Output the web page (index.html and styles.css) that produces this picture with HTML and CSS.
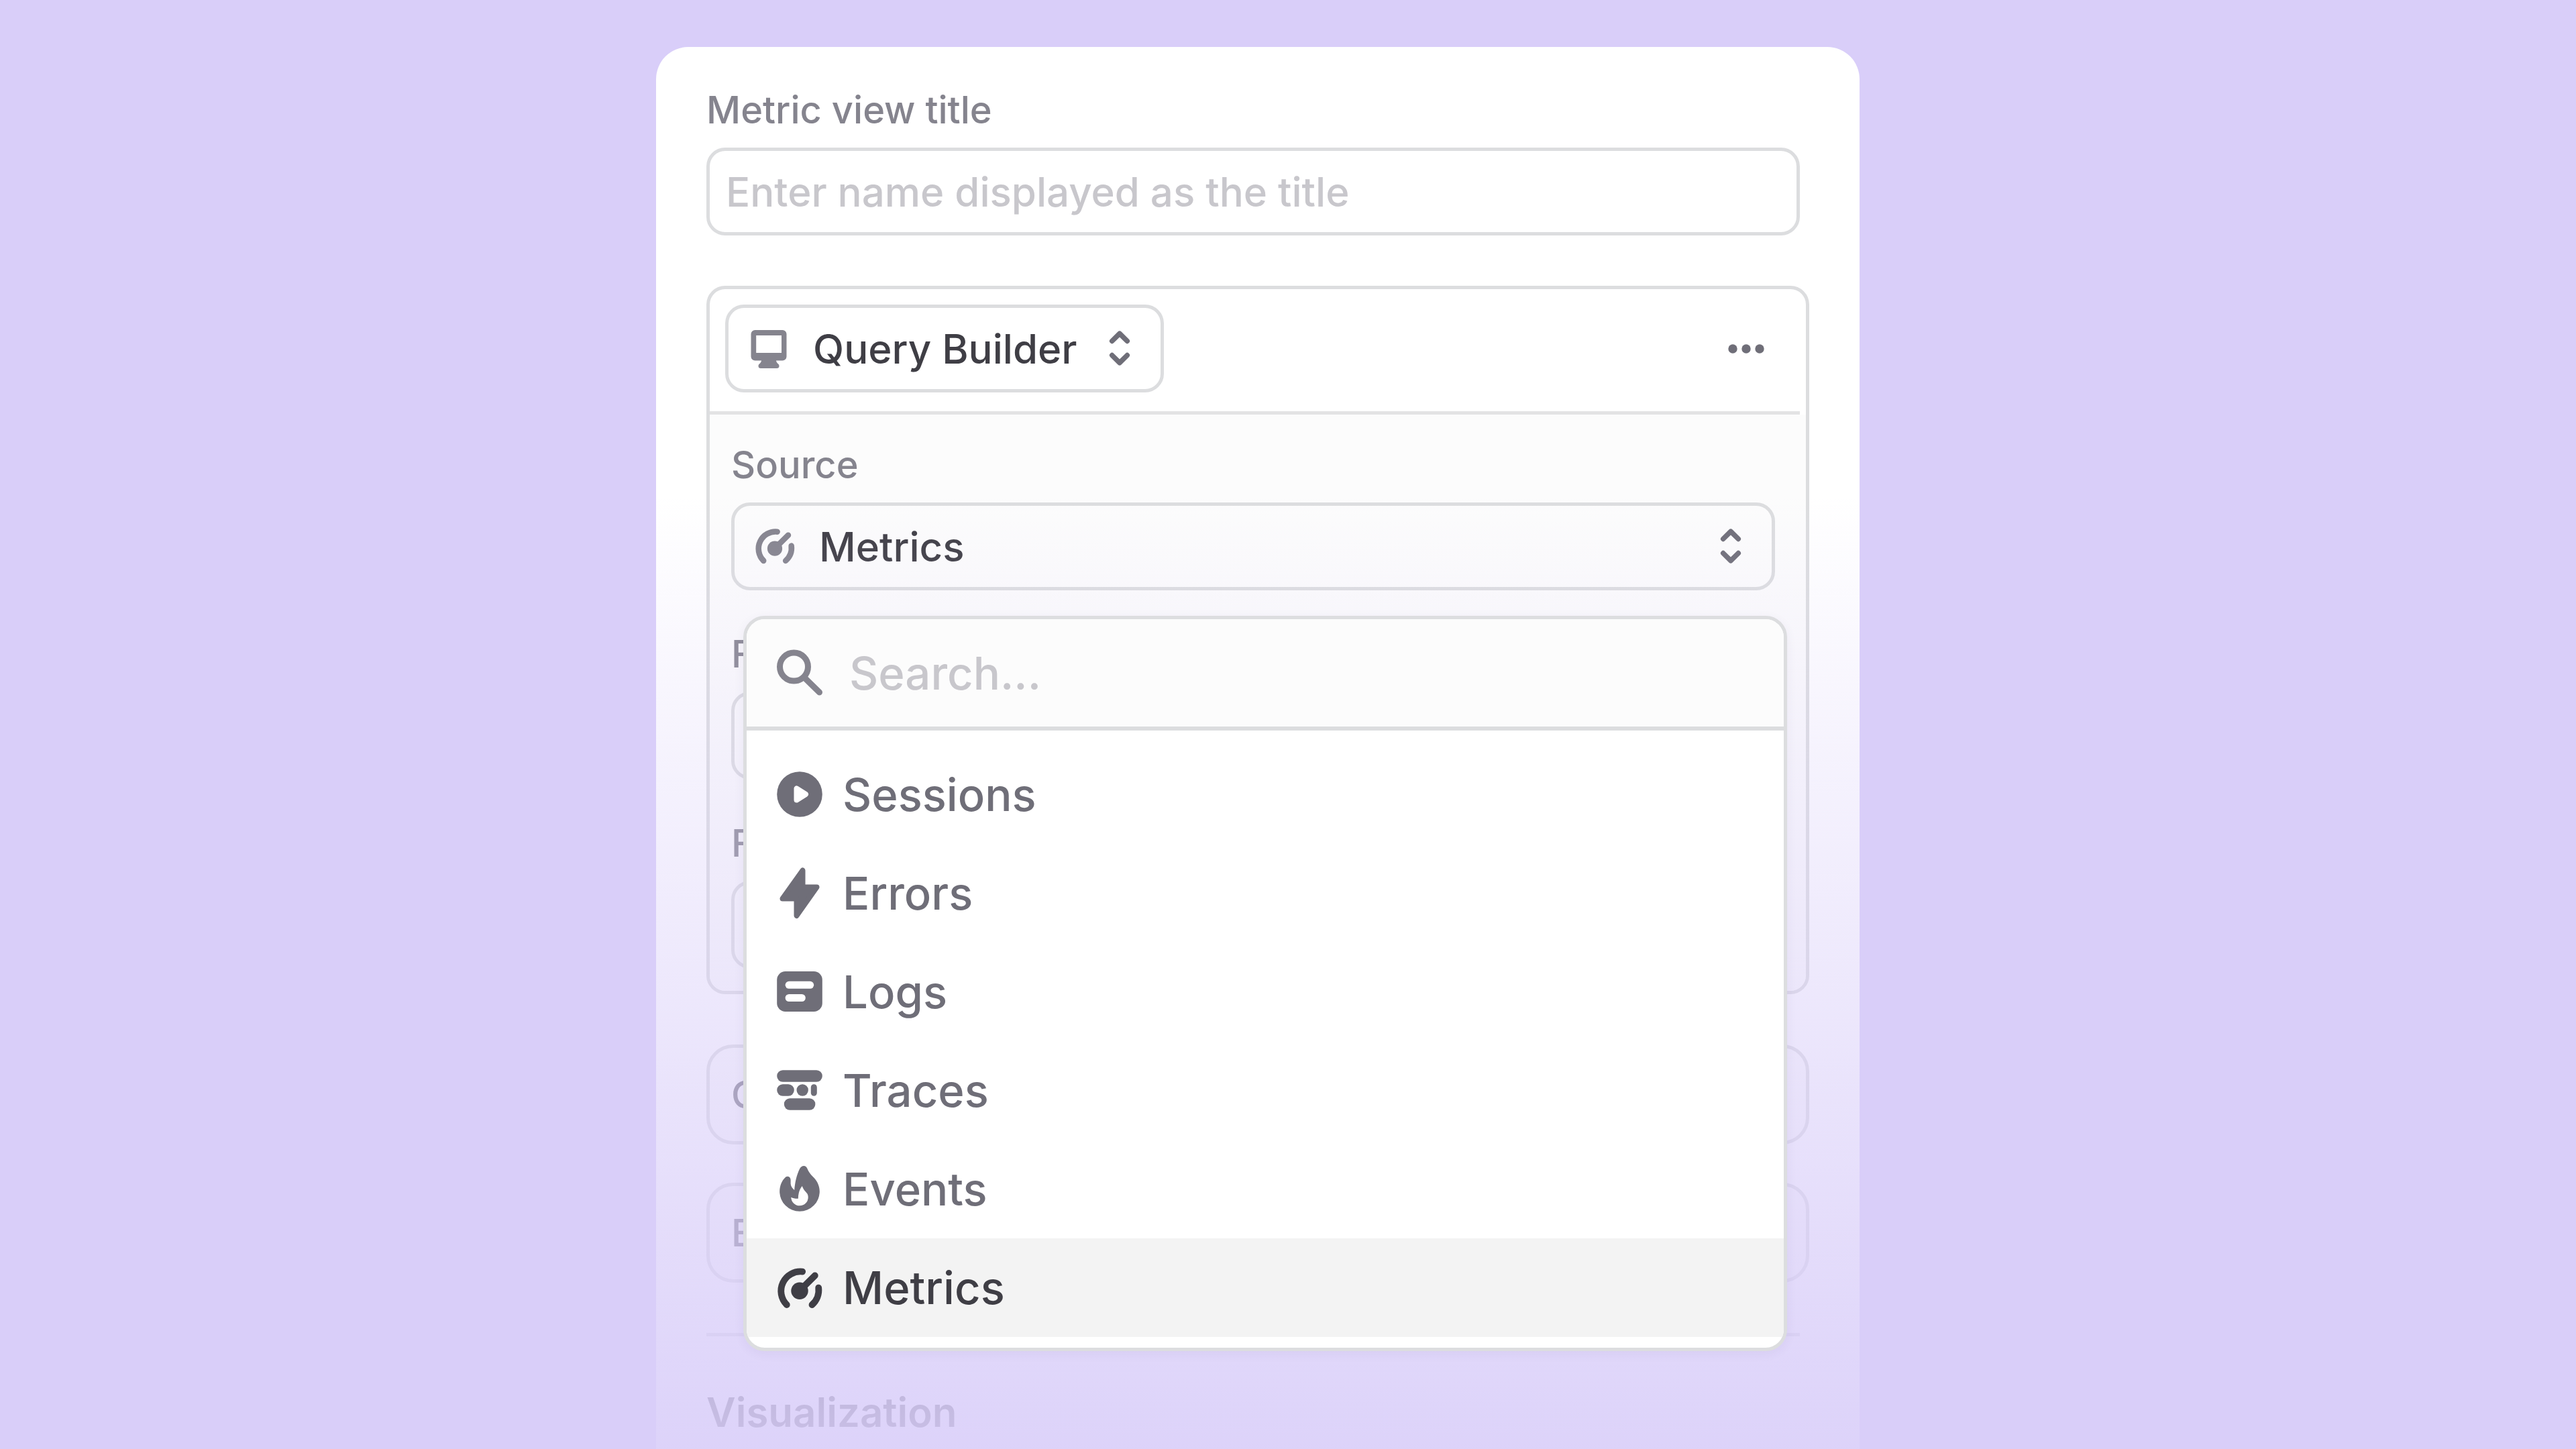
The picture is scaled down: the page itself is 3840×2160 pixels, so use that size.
FILE: index.html
```html
<!DOCTYPE html>
<html lang="en">
<head>
<meta charset="utf-8">
<title>Metric view</title>
<link rel="stylesheet" href="styles.css">
</head>
<body>
<svg class="sprite" aria-hidden="true">
  <symbol id="gauge" viewBox="0 0 80 80">
    <g fill="none" stroke="currentColor" stroke-width="9.8" stroke-linecap="round">
      <path d="M44.2 15.6A29 29 0 0 0 20.8 65M68.2 39.6A29 29 0 0 1 58.5 65M40 44L62.8 21.4"/>
    </g>
    <circle cx="40" cy="44.2" r="12.7" fill="currentColor"/>
  </symbol>
  <symbol id="chevrons" viewBox="0 0 70 70">
    <path d="M23.7 24.4L35 13.3L46.3 24.4M23.7 45.6L35 56.7L46.3 45.6" fill="none" stroke="currentColor" stroke-width="7.5" stroke-linecap="round" stroke-linejoin="round"/>
  </symbol>
</svg>
<main class="card">
  <form class="form">
    <div class="field field-title">
      <label class="label" for="title">Metric view title</label>
      <input class="input" id="title" type="text" placeholder="Enter name displayed as the title">
    </div>

    <section class="panel">
      <header class="panel-header">
        <div class="select-wrap select-auto">
          <svg class="select-icon" viewBox="0 0 70 70" aria-hidden="true"><path fill="currentColor" fill-rule="evenodd" d="M14.5 8h41a6 6 0 0 1 6 6v33.500a6 6 0 0 1-6 6H46c.3 2 1.200 3.300 2.800 4.700 1.300 1.200 1.700 2.200 1.700 3.500 0 2-1.300 3.300-3.500 3.300H23c-2.200 0-3.500-1.300-3.500-3.300 0-1.300.4-2.300 1.700-3.500 1.600-1.400 2.500-2.700 2.800-4.700h-9.500a6 6 0 0 1-6-6V14a6 6 0 0 1 6-6zM16.200 16v26h37.800V16z"/></svg>
          <select class="select" aria-label="Query type"><option>Query Builder</option></select>
          <svg class="select-arrow" aria-hidden="true"><use href="#chevrons"/></svg>
        </div>
        <button class="more" type="button" aria-label="More options">
          <svg class="more-icon" viewBox="0 0 60 60" aria-hidden="true"><g fill="currentColor"><circle cx="10" cy="30" r="6.700"/><circle cx="30" cy="30" r="6.700"/><circle cx="50" cy="30" r="6.700"/></g></svg>
        </button>
      </header>
      <div class="panel-body">
        <div class="field">
          <label class="label" for="source">Source</label>
          <div class="select-wrap">
            <svg class="select-icon" aria-hidden="true"><use href="#gauge"/></svg>
            <select class="select" id="source"><option>Metrics</option></select>
            <svg class="select-arrow" aria-hidden="true"><use href="#chevrons"/></svg>
          </div>
          <div class="menu">
            <div class="menu-search">
              <svg class="menu-icon search-icon" viewBox="0 0 80 80" aria-hidden="true"><g fill="none" stroke="currentColor" stroke-width="9" stroke-linecap="round"><circle cx="31.500" cy="31" r="21"/><path d="M47 47L69.500 69"/></g></svg>
              <input class="search-input" type="text" placeholder="Search..." aria-label="Search sources">
            </div>
            <div class="menu-list">
              <button class="item" type="button">
                <svg class="menu-icon" viewBox="0 0 80 80" aria-hidden="true"><circle cx="40" cy="39" r="33.800" fill="currentColor"/><path d="M35.500 30.500V47.500L49 39z" fill="#fff" stroke="#fff" stroke-width="8" stroke-linejoin="round"/></svg>
                Sessions
              </button>
              <button class="item" type="button">
                <svg class="menu-icon" viewBox="0 0 80 80" aria-hidden="true"><path d="M44.500 5.500V30.500H65.500L35.500 73V47.500H14.500z" fill="currentColor" stroke="currentColor" stroke-width="8" stroke-linejoin="round"/></svg>
                Errors
              </button>
              <button class="item" type="button">
                <svg class="menu-icon" viewBox="0 0 80 80" aria-hidden="true"><rect x="6.200" y="9" width="67.600" height="60" rx="12.500" fill="currentColor"/><g fill="#fff"><rect x="18.600" y="23.800" width="42.600" height="11" rx="5.500"/><rect x="18.600" y="43" width="30.200" height="11" rx="5.500"/></g></svg>
                Logs
              </button>
              <button class="item" type="button">
                <svg class="menu-icon" viewBox="0 0 80 80" aria-hidden="true"><g fill="currentColor"><rect x="6.200" y="9.300" width="67.600" height="17.400" rx="8.700"/><rect x="6.200" y="30.300" width="25.600" height="17.400" rx="8.700"/><circle cx="44.200" cy="39" r="8.700"/><rect x="56.800" y="30.300" width="9" height="17.400" rx="4.500"/><rect x="16.800" y="51.300" width="46.600" height="17.400" rx="8.700"/></g></svg>
                Traces
              </button>
              <button class="item" type="button">
                <svg class="menu-icon" viewBox="0 0 80 80" aria-hidden="true"><path fill="currentColor" fill-rule="evenodd" d="M46.300 5C48.600 5 50.300 6.500 51.300 8.800C53.200 13.500 56 17.600 59.700 21C66 27 69.800 34.500 69.800 43A29.700 29.700 0 0 1 10.200 43C10.200 34.500 13.500 27 18.500 22.200C21.500 19.500 26.500 21 26.600 26V31.500C26.800 35.500 29.200 38.500 32.200 41C33 30 35.500 18.500 40 9.500C41.500 6.500 43.500 5 46.300 5ZM43.800 35C40 39.500 37.800 46 37.800 53.800C34 54 30.500 53.500 27.300 51.800A12.700 12.700 0 1 0 52.700 51.500C52.700 47.500 50.800 45.500 48.500 43C46.300 40.600 44.800 38.200 43.800 35Z"/></svg>
                Events
              </button>
              <button class="item item-active" type="button" aria-pressed="true">
                <svg class="menu-icon" aria-hidden="true"><use href="#gauge"/></svg>
                Metrics
              </button>
            </div>
          </div>
        </div>
        <div class="field">
          <label class="label" for="field">Field</label>
          <div class="select-wrap"><select class="select" id="field"></select></div>
        </div>
        <div class="field">
          <label class="label" for="filter">Filter</label>
          <div class="select-wrap"><select class="select" id="filter"></select></div>
        </div>
      </div>
    </section>

    <div class="extras">
      <button class="extra" type="button">Group</button>
      <button class="extra" type="button">Each</button>
    </div>

    <section class="visual">
      <h2 class="heading">Visualization</h2>
    </section>
  </form>
</main>
</body>
</html>
```
FILE: styles.css
```css
:root {
  --backdrop: #d9cef9;
  --line: #dcdddf;
  --muted: #85848e;
  --mid: #6f6e78;
  --ink: #3f3e45;
  --hint: #c8c7cc;
  --radius: 28px;
}

* {
  box-sizing: border-box;
}

body {
  display: flex;
  flex-direction: column;
  min-height: 100vh;
  margin: 0;
  padding-top: 70px;
  background: var(--backdrop);
  color: var(--ink);
  font-family: Inter, "Liberation Sans", sans-serif;
}

button,
input,
select {
  margin: 0;
  font-family: inherit;
}

svg {
  display: block;
  flex: none;
}

.sprite {
  position: absolute;
  width: 0;
  height: 0;
}

.card {
  position: relative;
  flex: 1;
  width: 46.72%;
  margin-left: 25.47%;
  padding: 60px 75px 0;
  border-radius: 48px 48px 0 0;
  background: #fff;
}

/* Fades the lower part of the card into the backdrop; the open menu stays above it. */
.card::after {
  content: "";
  position: absolute;
  inset: 0;
  background: linear-gradient(rgb(217 206 249 / 0) 670px, rgb(217 206 249 / 1) 2240px);
  pointer-events: none;
  z-index: 1;
}

.field {
  position: relative;
  display: flex;
  flex-direction: column;
  gap: 22px;
}

.field-title {
  margin-right: 14px;
}

.label {
  color: var(--muted);
  font-size: 56px;
  font-weight: 500;
  line-height: 68px;
}

.input,
.select {
  width: 100%;
  height: 131px;
  border: 5px solid var(--line);
  border-radius: var(--radius);
  background: transparent;
  color: var(--ink);
  font-size: 60px;
  font-weight: 500;
}

.input {
  padding: 0 24px;
}

.input::placeholder,
.search-input::placeholder {
  color: var(--hint);
  opacity: 1;
}

.select-wrap {
  position: relative;
}

.select {
  display: block;
  padding: 0 124px 0 126px;
  appearance: none;
}

.select-auto .select {
  width: auto;
}

.select-icon,
.select-arrow {
  position: absolute;
  top: 30px;
  width: 70px;
  height: 70px;
  pointer-events: none;
}

.select-icon {
  left: 30px;
  color: var(--muted);
}

.select-arrow {
  right: 31px;
  color: var(--mid);
}

.panel {
  margin-top: 75px;
  border: 5px solid var(--line);
  border-radius: var(--radius);
}

.panel-header {
  display: flex;
  align-items: center;
  justify-content: space-between;
  margin-right: 9px;
  padding: 23px 50px 28px 23px;
  border-bottom: 5px solid #e3e3e4;
}

.more {
  padding: 0;
  border: 0;
  background: none;
  color: var(--mid);
}

.more-icon {
  width: 60px;
  height: 60px;
}

.panel-body {
  display: flex;
  flex-direction: column;
  gap: 61px;
  padding: 41px 46px 33px 32px;
  border-radius: 0 0 23px 23px;
  background: #fcfcfc;
}

.menu {
  position: absolute;
  top: calc(100% + 38px);
  left: 18px;
  right: -18px;
  z-index: 2;
  overflow: hidden;
  border: 5px solid var(--line);
  border-radius: 32px;
  background: #fff;
  box-shadow: 0 4px 16px rgb(60 50 100 / 0.06);
}

.menu-search {
  display: flex;
  align-items: center;
  gap: 34px;
  height: 166px;
  padding: 0 39px;
  border-bottom: 6px solid var(--line);
  background: #fcfcfc;
}

.menu-icon {
  width: 80px;
  height: 80px;
}

.search-icon {
  color: var(--muted);
}

.search-input {
  flex: 1;
  min-width: 0;
  padding: 0;
  border: 0;
  background: none;
  color: var(--ink);
  font-size: 67px;
  font-weight: 500;
}

.menu-list {
  padding: 22px 0 16px;
}

.item {
  display: flex;
  align-items: center;
  gap: 24px;
  width: 100%;
  height: 147px;
  padding: 0 39px;
  border: 0;
  background: none;
  color: var(--mid);
  font-size: 67px;
  font-weight: 500;
  text-align: left;
}

.item-active {
  background: #f3f3f3;
  color: var(--ink);
}

.extras {
  display: flex;
  flex-direction: column;
  gap: 57px;
  margin-top: 75px;
}

.extra {
  height: 149px;
  padding: 0 32px;
  border: 5px solid var(--line);
  border-radius: 40px;
  background: #fcfcfc;
  color: var(--mid);
  font-size: 56px;
  font-weight: 500;
  text-align: left;
}

.visual {
  margin: 75px 14px 0 0;
  padding-top: 77px;
  border-top: 5px solid var(--line);
}

.heading {
  margin: 0;
  font-size: 60px;
  font-weight: 600;
  line-height: 72px;
}
```
